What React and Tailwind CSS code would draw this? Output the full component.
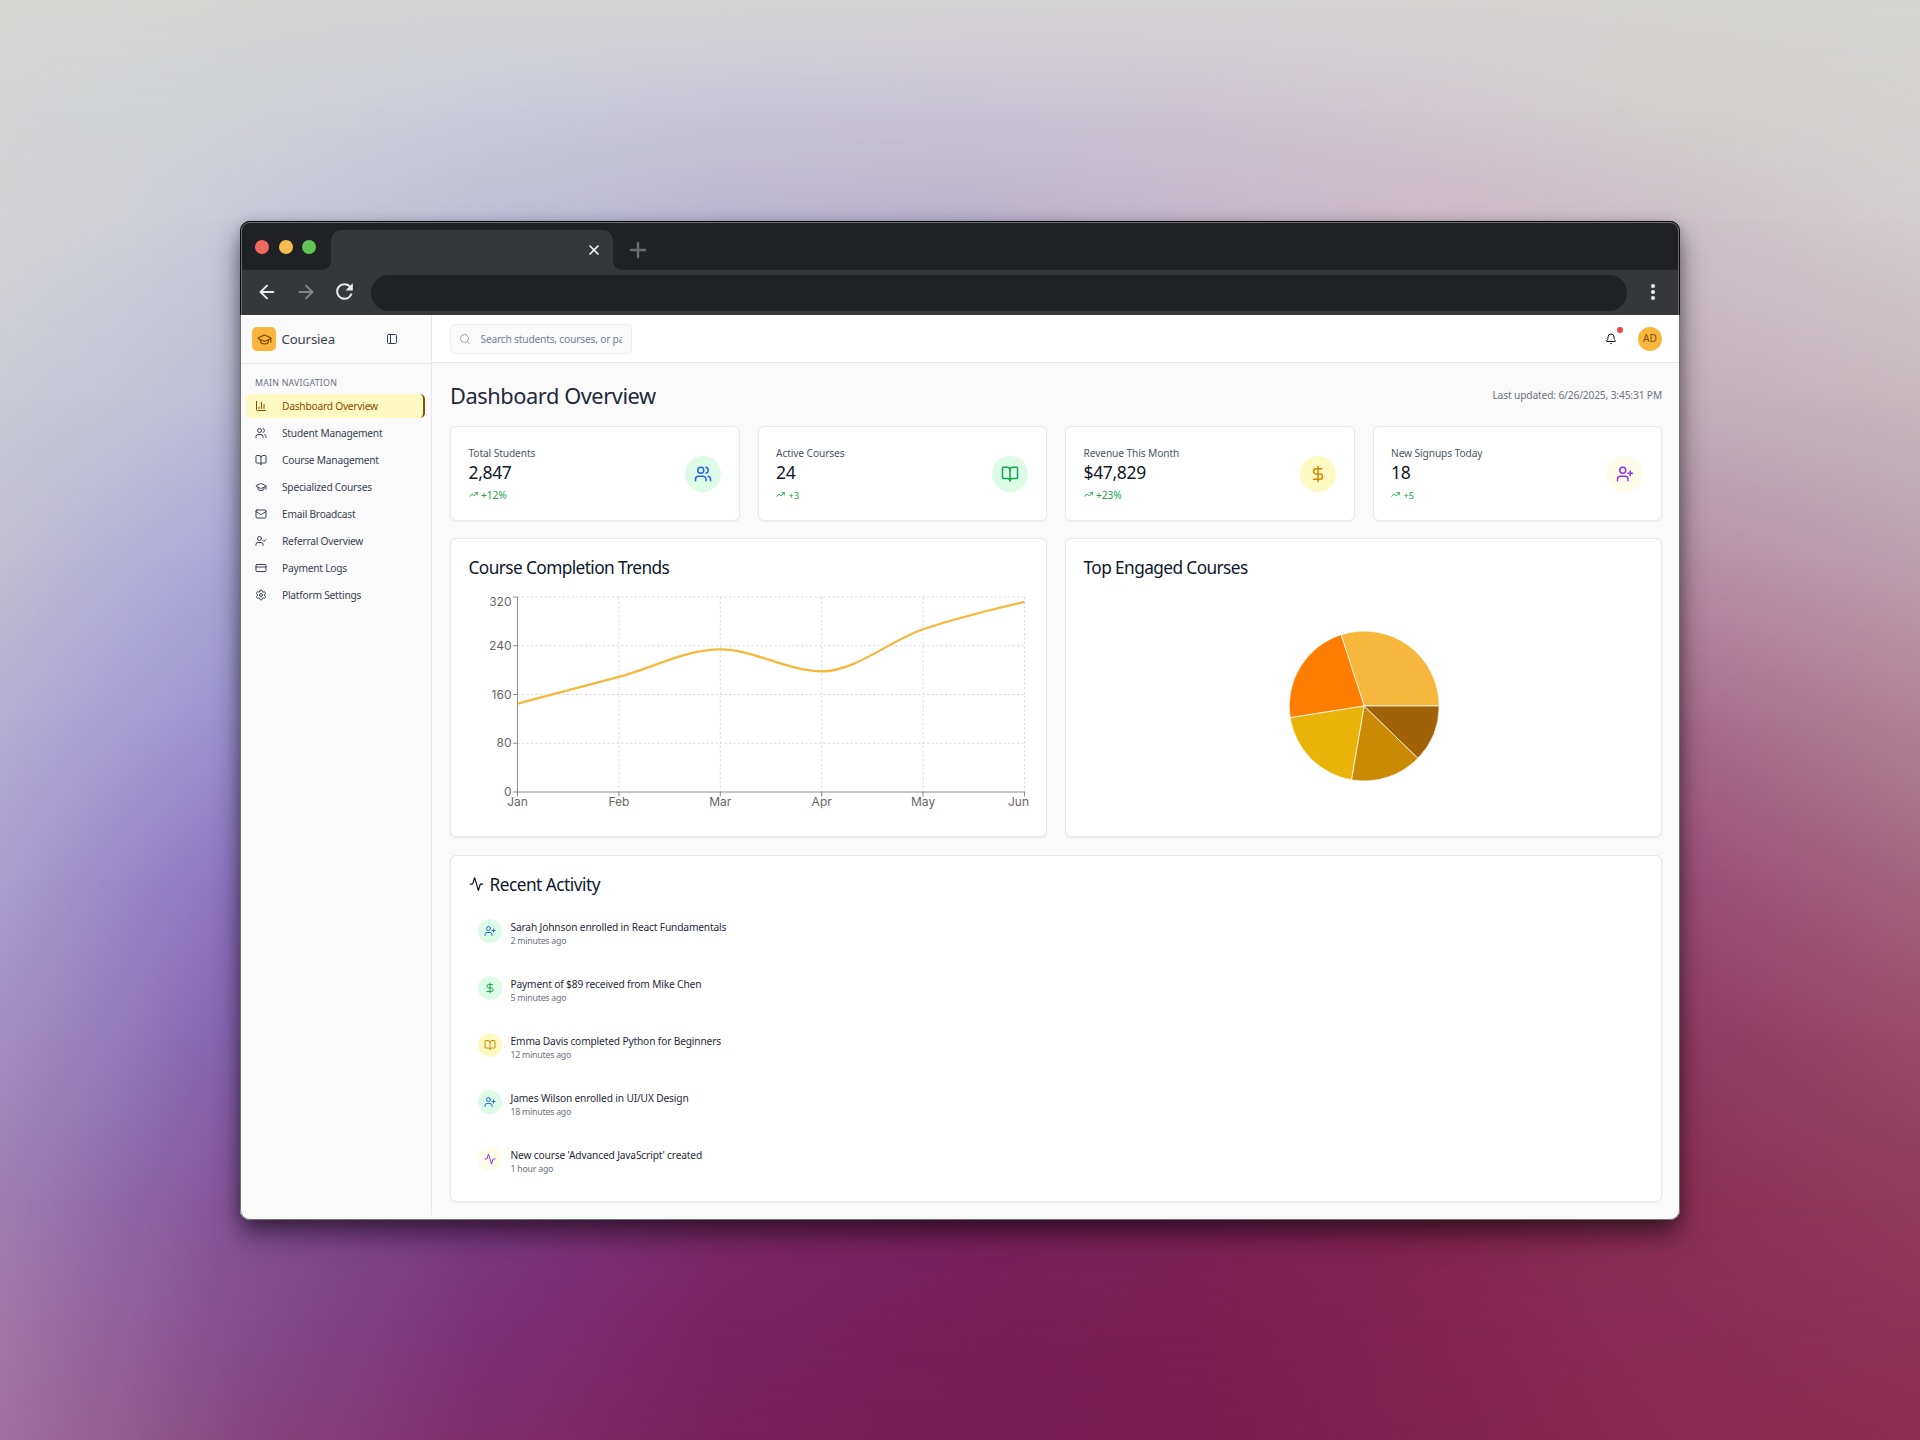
import React from "react";
import {
  Activity,
  ArrowLeft,
  ArrowRight,
  Bell,
  BookOpen,
  ChartColumn,
  CreditCard,
  DollarSign,
  GraduationCap,
  Mail,
  PanelLeft,
  Plus,
  Search,
  Settings,
  TrendingUp,
  UserCheck,
  UserPlus,
  Users,
  X,
} from "lucide-react";

/* ---------- wallpaper: a colour mesh, blended row by row ---------- */

const MESH_X = [0, 120, 240, 480, 720, 960, 1200, 1440, 1680, 1920];
const MESH = [
  [0, "d6d6d5 d6d6d5 d5d5d4 d5d5d5 d5d5d4 d5d4d4 d5d4d4 d5d4d3 d5d5d3 d5d5d4"],
  [110, "d4d4d5 d2d3d5 d0d1d5 cacbd8 c8c5d6 c8c4d4 ccc4d0 d0c9ce d2cfce d4d3d2"],
  [220, "d3d2d4 cfcfd5 c8cad7 bfbed7 bab5d1 bab2cd c4b6c8 ccb9c7 ccc2c7 d2cdce"],
  [400, "c9cad4 c4c4d8 bdbbd8 a9a0d0 a497c6 a893c0 b597b5 bd9bb0 c3aeba c6b8bd"],
  [560, "c1bdd2 b5b1d6 aaa5d6 9480c8 9078b8 9770ae a4759f ae7a9c b690a6 bd9fae"],
  [720, "b3aed2 a79fd3 9a90d0 7f60b8 8058a8 85509a 93558a 9c5a84 a86a8b b08293"],
  [880, "a99fcd 9a88c8 8b73bf 7a4ca8 7a4095 80388a 883a78 903f70 9a4e76 a4657f"],
  [1040, "a28dc0 927abb 8560ae 784098 7a3080 802c70 842d66 882f60 903b63 9a4b68"],
  [1200, "9f7db0 9068aa 84529a 7b3a86 7b2a6a 7b2161 7f225a 85264f 8c3055 933a5c"],
  [1320, "a076a6 92629c 864d8e 7c3279 7b2362 7b1e5a 7d1f54 84244f 8c2d57 903257"],
  [1440, "a0709f 945d90 884680 7e2e6b 7b205c 7a1d58 7c1d53 82234e 8a2a50 8e2e51"],
];

function Wallpaper() {
  return (
    <div className="absolute inset-0">
      {MESH.map(([y, colours], i) => {
        const top = i === 0 ? 0 : MESH[i - 1][0];
        const stops = colours
          .split(" ")
          .map((c, k) => `#${c} ${MESH_X[k]}px`)
          .join(", ");
        const mask =
          i === 0
            ? "none"
            : `linear-gradient(to bottom, transparent 0px, black ${y - top}px)`;
        return (
          <div
            key={y}
            className="absolute inset-x-0 bottom-0"
            style={{
              top,
              background: `linear-gradient(to right, ${stops})`,
              maskImage: mask,
            }}
          />
        );
      })}
    </div>
  );
}

/* ---------- browser frame ---------- */

function ReloadIcon() {
  return (
    <svg viewBox="0 0 24 24" className="size-[25px] fill-[#e8eaed]">
      <path d="M17.65 6.35A7.958 7.958 0 0 0 12 4a8 8 0 1 0 7.73 10h-2.08A5.99 5.99 0 0 1 12 18c-3.31 0-6-2.69-6-6s2.69-6 6-6c1.66 0 3.14.69 4.22 1.78L13 11h7V4l-2.35 2.35z" />
    </svg>
  );
}

function BrowserChrome() {
  return (
    <header className="bg-[#36373a]">
      <div className="flex h-[49px]">
        <div className="flex w-[91px] items-center gap-[9.5px] rounded-br-[9px] bg-[#202124] pt-0.5 pl-[15px]">
          <span className="size-3.5 rounded-full bg-[#ee6a5f]" />
          <span className="size-3.5 rounded-full bg-[#f5bd4f]" />
          <span className="size-3.5 rounded-full bg-[#61c454]" />
        </div>
        <div className="w-[282px] bg-[linear-gradient(to_bottom,#202124_50%,#36373a_50%)] pt-[9px]">
          <div className="flex h-10 items-center justify-end rounded-t-[10px] bg-[#36373a] pr-[11px]">
            <X className="size-4 text-white" strokeWidth={2.3} />
          </div>
        </div>
        <div className="flex flex-1 items-center rounded-bl-[9px] bg-[#202124] pt-[9px] pl-[13px]">
          <Plus className="size-6 text-[#6b6c6f]" strokeWidth={2.4} />
        </div>
      </div>
      <div className="flex h-[45px] items-center pb-0.5 pl-4">
        <ArrowLeft className="size-[22px] text-[#e8eaed]" strokeWidth={2} />
        <ArrowRight className="ml-[17px] size-[22px] text-[#87888b]" strokeWidth={2} />
        <div className="ml-[15px]">
          <ReloadIcon />
        </div>
        <div className="ml-[14px] h-9 w-[1256px] translate-y-px rounded-full bg-[#202124]" />
        <div className="ml-6 flex flex-col gap-0.5">
          <span className="size-1 rounded-full bg-[#f1f1f1]" />
          <span className="size-1 rounded-full bg-[#f1f1f1]" />
          <span className="size-1 rounded-full bg-[#f1f1f1]" />
        </div>
      </div>
    </header>
  );
}

/* ---------- sidebar ---------- */

const NAV = [
  ["Dashboard Overview", ChartColumn],
  ["Student Management", Users],
  ["Course Management", BookOpen],
  ["Specialized Courses", GraduationCap],
  ["Email Broadcast", Mail],
  ["Referral Overview", UserCheck],
  ["Payment Logs", CreditCard],
  ["Platform Settings", Settings],
];

function Sidebar() {
  return (
    <aside className="h-[900px] w-[192px] shrink-0 border-r border-[#e5e7eb] bg-[#fafafa]">
      <div className="flex h-[49px] items-center border-b border-[#e5e7eb] pl-3">
        <span className="flex size-6 items-center justify-center rounded-[5px] bg-[#f6b73c]">
          <GraduationCap className="size-[15px] text-[#894b00]" />
        </span>
        <span className="ml-[5.5px] pt-px text-[13.2px] tracking-[-0.01em] text-[#374151]">Coursiea</span>
        <PanelLeft className="ml-[51px] size-3 text-[#374151]" />
      </div>
      <div className="mt-2.5 mb-px flex h-[19px] items-center pl-[15px] text-[8.8px] tracking-[0.026em] text-[#6b7280]">
        MAIN NAVIGATION
      </div>
      <nav className="flex flex-col gap-[3px] pr-1.5 pl-1.5">
        {NAV.map(([label, Icon], i) => (
          <a
            key={label}
            className={
              i === 0
                ? "flex h-6 items-center rounded-[5px] border-r-2 border-[#894b00] bg-[#fef9c2] pl-[9px] text-[#894b00]"
                : "flex h-6 items-center rounded-[5px] pl-[9px] text-[#374151]"
            }
          >
            <Icon className="size-3" />
            <span className="ml-[15px] pt-[2px] text-[10.2px] tracking-[-0.022em]">{label}</span>
          </a>
        ))}
      </nav>
    </aside>
  );
}

/* ---------- top bar ---------- */

function TopBar() {
  return (
    <div className="flex h-12 items-center justify-between border-b border-[#e5e7eb] bg-white pr-[18px] pl-[18px]">
      <div className="flex h-[30px] w-[182px] items-center rounded-[5px] border border-[#eceef0] bg-[#fafafa] pr-[9px] pl-[8px]">
        <Search className="size-3 shrink-0 text-[#9ca3af]" />
        <span className="ml-[9.5px] overflow-hidden pt-[3px] text-[10.2px] tracking-[-0.018em] whitespace-nowrap text-[#71809a]">
          Search students, courses, or payments...
        </span>
      </div>
      <div className="flex items-center gap-[21px]">
        <div className="relative">
          <Bell className="size-3 text-[#111827]" />
          <span className="absolute -top-1.5 -right-1.5 size-1.5 rounded-full bg-[#ef4444]" />
        </div>
        <span className="flex size-6 items-center justify-center rounded-full bg-[#f6b73c] pt-px text-[10.2px] text-[#894b00]">
          AD
        </span>
      </div>
    </div>
  );
}

/* ---------- stat cards ---------- */

const STATS = [
  ["Total Students", "2,847", "+12%", "text-[10.2px]", Users, "bg-[#dcfce7]", "text-[#2563eb]"],
  ["Active Courses", "24", "+3", "text-[9.4px]", BookOpen, "bg-[#dcfce7]", "text-[#16a34a]"],
  ["Revenue This Month", "$47,829", "+23%", "text-[10.2px]", DollarSign, "bg-[#fef9c2]", "text-[#ca8a04]"],
  ["New Signups Today", "18", "+5", "text-[9.4px]", UserPlus, "bg-[#fefce8]", "text-[#9333ea]"],
];

function StatCard({ stat }) {
  const [label, value, change, changeSize, Icon, circle, colour] = stat;
  return (
    <div className="flex h-[95px] items-center justify-between rounded-md border border-[#e6e9f0] bg-white pr-[18px] pl-[17.5px] shadow-[0_1px_2px_rgba(0,0,0,0.05)]">
      <div className="flex flex-col">
        <span className="h-[15px] pt-px text-[10.2px] leading-[15px] tracking-[-0.01em] text-[#4b5563]">
          {label}
        </span>
        <span className="h-6 text-[17.5px] leading-[25px] tracking-[-0.02em] text-[#111827]">{value}</span>
        <span className="mt-1 flex h-[15px] items-center gap-[3.5px] text-[#16a34a]">
          <TrendingUp className="size-[9px] -translate-y-px" strokeWidth={2.4} />
          <span className={`${changeSize} leading-[15px] tracking-[-0.01em]`}>{change}</span>
        </span>
      </div>
      <span className={`flex size-9 items-center justify-center rounded-full ${circle} ${colour}`}>
        <Icon className="size-[18px]" />
      </span>
    </div>
  );
}

/* ---------- line chart ---------- */

const TREND = [
  ["Jan", 145],
  ["Feb", 189],
  ["Mar", 234],
  ["Apr", 198],
  ["May", 267],
  ["Jun", 312],
];
const PLOT = { left: 48.5, top: 17, width: 507, height: 195 };

const sign = (n) => (n < 0 ? -1 : 1);

function monotonePath(points) {
  const n = points.length;
  const slope = (a, b) => (b[1] - a[1]) / (b[0] - a[0]);
  const tangents = points.map((p, i) => {
    if (i === 0 || i === n - 1) return 0;
    const s0 = slope(points[i - 1], p);
    const s1 = slope(p, points[i + 1]);
    const mean = (s0 + s1) / 2;
    return (sign(s0) + sign(s1)) * Math.min(Math.abs(s0), Math.abs(s1), 0.5 * Math.abs(mean));
  });
  tangents[0] = (3 * slope(points[0], points[1]) - tangents[1]) / 2;
  tangents[n - 1] = (3 * slope(points[n - 2], points[n - 1]) - tangents[n - 2]) / 2;
  let d = `M${points[0][0]},${points[0][1]}`;
  for (let i = 1; i < n; i++) {
    const [x0, y0] = points[i - 1];
    const [x1, y1] = points[i];
    const dx = (x1 - x0) / 3;
    d += `C${x0 + dx},${y0 + dx * tangents[i - 1]},${x1 - dx},${y1 - dx * tangents[i]},${x1},${y1}`;
  }
  return d;
}

function TrendChart() {
  const { left, top, width, height } = PLOT;
  const right = left + width;
  const bottom = top + height;
  const xs = TREND.map((_, i) => left + (width * i) / 5);
  const yOf = (v) => bottom - (v / 320) * height;
  const points = TREND.map(([, v], i) => [xs[i], yOf(v)]);
  return (
    <svg viewBox="0 0 577 240" className="h-[240px] w-[577px]">
      <g stroke="#cccccc" strokeWidth="0.75" strokeDasharray="2.25 2.25">
        {[80, 160, 240, 320].map((v) => (
          <line key={v} x1={left} x2={right} y1={yOf(v)} y2={yOf(v)} />
        ))}
        {xs.slice(1).map((x) => (
          <line key={x} x1={x} x2={x} y1={top} y2={bottom} />
        ))}
      </g>
      <g stroke="#666666" strokeWidth="0.75">
        <line x1={left} x2={left} y1={top} y2={bottom} />
        <line x1={left} x2={right} y1={bottom} y2={bottom} />
        {[0, 80, 160, 240, 320].map((v) => (
          <line key={v} x1={left - 4.5} x2={left} y1={yOf(v)} y2={yOf(v)} />
        ))}
        {xs.map((x) => (
          <line key={x} x1={x} x2={x} y1={bottom} y2={bottom + 4.5} />
        ))}
      </g>
      <g className="fill-[#666666] font-['Inter',sans-serif] text-[12px]">
        {[0, 80, 160, 240, 320].map((v) => (
          <text key={v} x={left - 6} y={v === 320 ? top + 9 : yOf(v) + 4} textAnchor="end">
            {v}
          </text>
        ))}
        {TREND.map(([m], i) => (
          <text key={m} x={i === 5 ? right - 6 : xs[i]} y={bottom + 14} textAnchor="middle">
            {m}
          </text>
        ))}
      </g>
      <path d={monotonePath(points)} fill="none" stroke="#f6b73c" strokeWidth="2.25" />
    </svg>
  );
}

/* ---------- pie chart ---------- */

const SLICES = [
  [0, 108, "#f6b73c"],
  [108, 189, "#ff7d00"],
  [189, 260.3, "#eab308"],
  [260.3, 315.8, "#ca8a04"],
  [315.8, 360, "#a16207"],
];

function PieChart() {
  const r = 75;
  const at = (deg) => {
    const a = (deg * Math.PI) / 180;
    return `${(r * Math.cos(a)).toFixed(2)},${(-r * Math.sin(a)).toFixed(2)}`;
  };
  return (
    <svg viewBox="-76.2 -76 152 152" className="size-[152px]">
      {SLICES.map(([from, to, colour]) => (
        <path
          key={colour}
          d={`M0,0L${at(from)}A${r},${r},0,0,0,${at(to)}Z`}
          fill={colour}
          stroke="#ffffff"
          strokeWidth="0.75"
          strokeLinejoin="round"
        />
      ))}
    </svg>
  );
}

/* ---------- recent activity ---------- */

const EVENTS = [
  ["Sarah Johnson enrolled in React Fundamentals", "2 minutes ago", UserPlus, "bg-[#dcfce7] text-[#2563eb]"],
  ["Payment of $89 received from Mike Chen", "5 minutes ago", DollarSign, "bg-[#dcfce7] text-[#16a34a]"],
  ["Emma Davis completed Python for Beginners", "12 minutes ago", BookOpen, "bg-[#fef9c2] text-[#ca8a04]"],
  ["James Wilson enrolled in UI/UX Design", "18 minutes ago", UserPlus, "bg-[#dcfce7] text-[#2563eb]"],
  ["New course 'Advanced JavaScript' created", "1 hour ago", Activity, "bg-[#fefce8] text-[#9333ea]"],
];

function RecentActivity() {
  return (
    <section className="mt-[18px] h-[347px] rounded-md border border-[#e5e7eb] bg-white px-[17.5px] shadow-[0_1px_2px_rgba(0,0,0,0.05)]">
      <h2 className="mt-[17px] flex h-6 items-center text-[17.3px] tracking-[-0.03em] text-[#0f172a]">
        <Activity className="mr-1.5 size-[15px] -translate-y-[1.5px]" />
        Recent Activity
      </h2>
      <ul className="mt-[22px] flex flex-col gap-[33px] pl-[9px]">
        {EVENTS.map(([title, time, Icon, colours]) => (
          <li key={title} className="flex h-6">
            <span className={`flex size-6 shrink-0 items-center justify-center rounded-full ${colours}`}>
              <Icon className="size-3" />
            </span>
            <span className="ml-[9px] flex flex-col pt-px">
              <span className="h-[15px] text-[10.2px] leading-[15px] tracking-[-0.015em] text-[#1f2937]">
                {title}
              </span>
              <span className="h-3 text-[8.8px] leading-3 tracking-[-0.028em] text-[#6b7280]">{time}</span>
            </span>
          </li>
        ))}
      </ul>
    </section>
  );
}

/* ---------- page ---------- */

export default function App() {
  return (
    <div className="relative h-[1440px] w-[1920px] overflow-hidden font-['Noto_Sans',sans-serif]">
      <Wallpaper />
      <div className="relative mx-auto mt-[221px] h-[999px] w-[1440px] rounded-[10px] shadow-[0_15px_26px_rgba(0,0,0,0.5),0_2px_12px_rgba(0,0,0,0.2)]">
        <div className="h-full overflow-hidden rounded-[10px] bg-[#fafafa]">
          <BrowserChrome />
          <div className="flex h-[905px]">
            <Sidebar />
            <div className="min-w-0 flex-1">
              <TopBar />
              <main className="px-[18px]">
                <div className="flex h-[63px] items-center justify-between pt-1">
                  <h1 className="text-[21.8px] tracking-[-0.02em] text-[#1e293b]">Dashboard Overview</h1>
                  <span className="pb-0.5 text-[10.2px] tracking-[-0.013em] text-[#6b7280]">
                    Last updated: 6/26/2025, 3:45:31 PM
                  </span>
                </div>
                <div className="grid grid-cols-4 gap-[18px]">
                  {STATS.map((stat) => (
                    <StatCard key={stat[0]} stat={stat} />
                  ))}
                </div>
                <div className="mt-[17px] grid grid-cols-2 gap-[18px]">
                  <section className="h-[299px] overflow-hidden rounded-md border border-[#e5e7eb] bg-white pt-[17px] shadow-[0_1px_2px_rgba(0,0,0,0.05)]">
                    <h2 className="flex h-6 items-center pl-[17.5px] text-[17.3px] tracking-[-0.035em] text-[#0f172a]">
                      Course Completion Trends
                    </h2>
                    <div className="pl-[17.5px]">
                      <TrendChart />
                    </div>
                  </section>
                  <section className="flex h-[299px] flex-col rounded-md border border-[#e5e7eb] bg-white pt-[17px] shadow-[0_1px_2px_rgba(0,0,0,0.05)]">
                    <h2 className="flex h-6 items-center pl-[17.5px] text-[17.3px] tracking-[-0.035em] text-[#0f172a]">
                      Top Engaged Courses
                    </h2>
                    <div className="mt-[50px] flex justify-center">
                      <PieChart />
                    </div>
                  </section>
                </div>
                <RecentActivity />
              </main>
            </div>
          </div>
        </div>
        <div className="pointer-events-none absolute inset-0 rounded-[10px] border border-[#6f7470]" />
        <div className="pointer-events-none absolute inset-x-0 top-0 h-[94px] rounded-t-[10px] border border-b-0 border-[#0b0c0d] p-0">
          <div className="h-full rounded-t-[9px] border border-b-0 border-[#6a6c6e]" />
        </div>
      </div>
    </div>
  );
}
